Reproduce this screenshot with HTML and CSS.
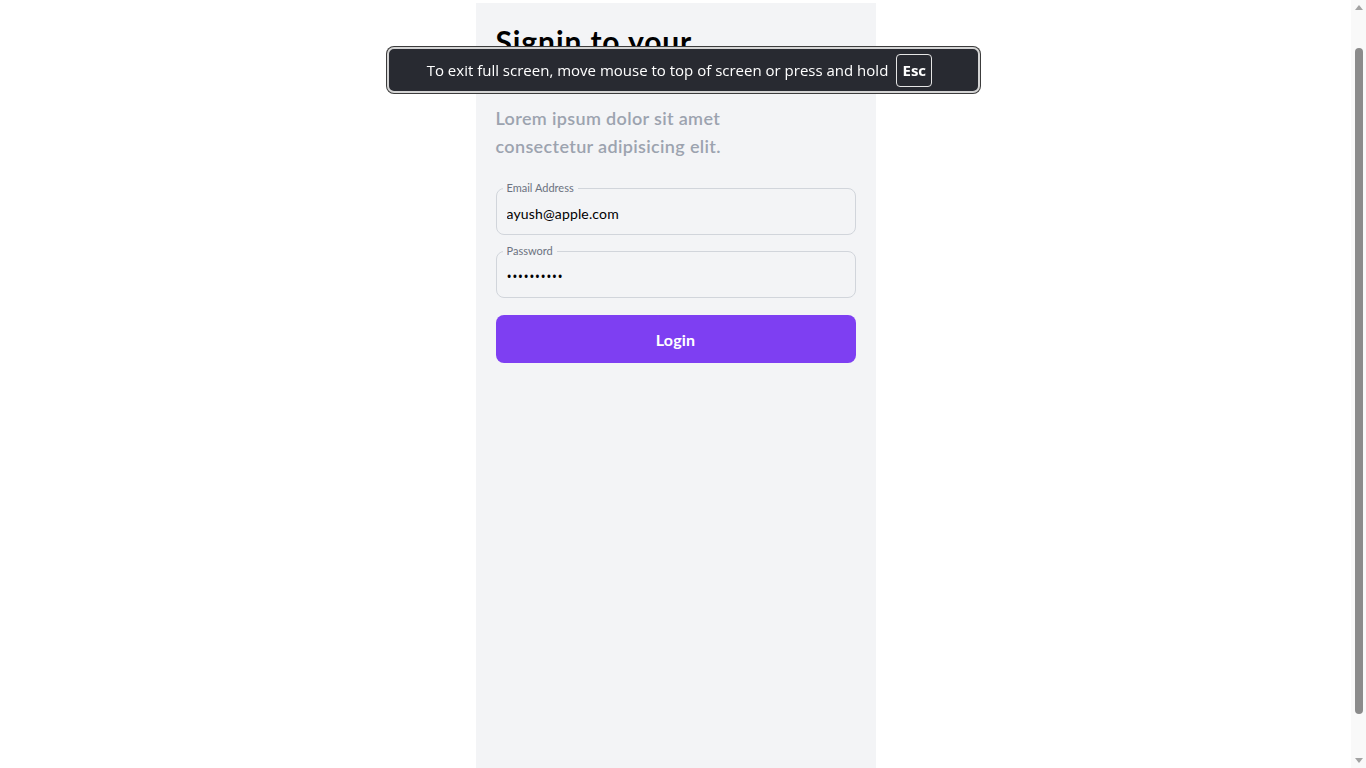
FILE: index.html
```html
<!DOCTYPE html>
<html lang="en">
<head>
<meta charset="utf-8">
<title>Signin</title>
<link rel="stylesheet" href="styles.css">
</head>
<body>
<main class="panel">
  <h1 class="title">Signin to your account</h1>
  <p class="subtitle">Lorem ipsum dolor sit amet consectetur adipisicing elit.</p>
  <form class="form">
    <fieldset class="field">
      <legend class="field-label">Email Address</legend>
      <input class="field-input" type="email" value="ayush@apple.com">
    </fieldset>
    <fieldset class="field">
      <legend class="field-label">Password</legend>
      <input class="field-input field-secret" type="password" value="1234567890">
    </fieldset>
    <button class="btn" type="button">Login</button>
  </form>
</main>
<div class="fs-toast">
  <span class="fs-text">To exit full screen, move mouse to top of screen or press and hold</span>
  <span class="fs-key">Esc</span>
</div>
<div class="scrollbar" aria-hidden="true">
  <span class="sb-arrow sb-up"></span>
  <span class="sb-track"><span class="sb-thumb"></span></span>
  <span class="sb-arrow sb-down"></span>
</div>
</body>
</html>
```
FILE: styles.css
```css
html, body {
  margin: 0;
  padding: 0;
  background: #ffffff;
}
body {
  font-family: "Lato", "Open Sans", sans-serif;
  color: #000;
  padding-right: 15px;
}
.panel {
  box-sizing: border-box;
  width: 400px;
  min-height: 848px;
  margin: 3px auto 0;
  padding: 20px;
  background: #f3f4f6;
}
.title {
  margin: 0;
  max-width: 260px;
  font-size: 30px;
  line-height: 36px;
  font-weight: 700;
  letter-spacing: 0.9px;
  color: #000;
}
.subtitle {
  margin: 9px 0 0;
  max-width: 240px;
  font-size: 18px;
  line-height: 28px;
  font-weight: 600;
  letter-spacing: 0.35px;
  color: #9ca3af;
}
.form {
  margin-top: 21px;
  display: flex;
  flex-direction: column;
}
.field {
  margin: 0 0 9px;
  padding: 0 6px;
  border: 1px solid #d1d5db;
  border-radius: 8px;
  min-width: 0;
}
.field-label {
  padding: 0 4px;
  font-size: 11px;
  line-height: 14px;
  color: #6b7280;
}
.field-input {
  display: block;
  box-sizing: border-box;
  width: 100%;
  height: 39px;
  margin: 0;
  padding: 0 4px 3px;
  border: 0;
  outline: none;
  background: transparent;
  font-family: inherit;
  font-size: 14px;
  letter-spacing: 0.15px;
  color: #000;
}
.field-secret {
  font-family: "Open Sans", sans-serif;
  letter-spacing: 0.4px;
}
.btn {
  margin-top: 8px;
  height: 48px;
  border: 0;
  border-radius: 8px;
  background: #7e3ff2;
  color: #fff;
  font-family: inherit;
  font-size: 16px;
  font-weight: 700;
  letter-spacing: 0.2px;
}
.fs-toast {
  position: fixed;
  left: 387px;
  top: 47px;
  width: 589px;
  height: 42px;
  box-sizing: content-box;
  display: flex;
  align-items: center;
  justify-content: center;
  gap: 8px;
  padding: 0;
  background: #282a31;
  border: 2px solid #d4d4d4;
  border-radius: 7px;
  box-shadow: 0 0 0 1px #3c3c3c;
  color: #fff;
  font-family: "Open Sans", sans-serif;
  font-size: 15px;
}
.fs-key {
  box-sizing: border-box;
  width: 36px;
  height: 33px;
  margin-right: 8px;
  display: flex;
  align-items: center;
  justify-content: center;
  border: 1px solid #e5e5e5;
  border-radius: 4px;
  font-weight: 700;
  font-size: 15px;
}
.scrollbar {
  position: fixed;
  top: 0;
  right: 0;
  width: 15px;
  height: 100vh;
  display: flex;
  flex-direction: column;
  align-items: center;
  background: #f9f9f9;
}
.sb-arrow {
  width: 15px;
  height: 15px;
  flex: none;
  display: flex;
  align-items: center;
  justify-content: center;
}
.sb-arrow::before {
  content: "";
  display: block;
  width: 0;
  height: 0;
  border-left: 4px solid transparent;
  border-right: 4px solid transparent;
}
.sb-up::before {
  border-bottom: 5px solid #a3a3a3;
}
.sb-down::before {
  border-top: 5px solid #a3a3a3;
}
.sb-track {
  flex: 1;
  width: 15px;
  box-sizing: border-box;
  display: flex;
  flex-direction: column;
  align-items: center;
  padding-top: 33px;
  padding-bottom: 39px;
}
.sb-thumb {
  flex: 1;
  width: 8px;
  border-radius: 4px;
  background: #8b8b8b;
}
```
